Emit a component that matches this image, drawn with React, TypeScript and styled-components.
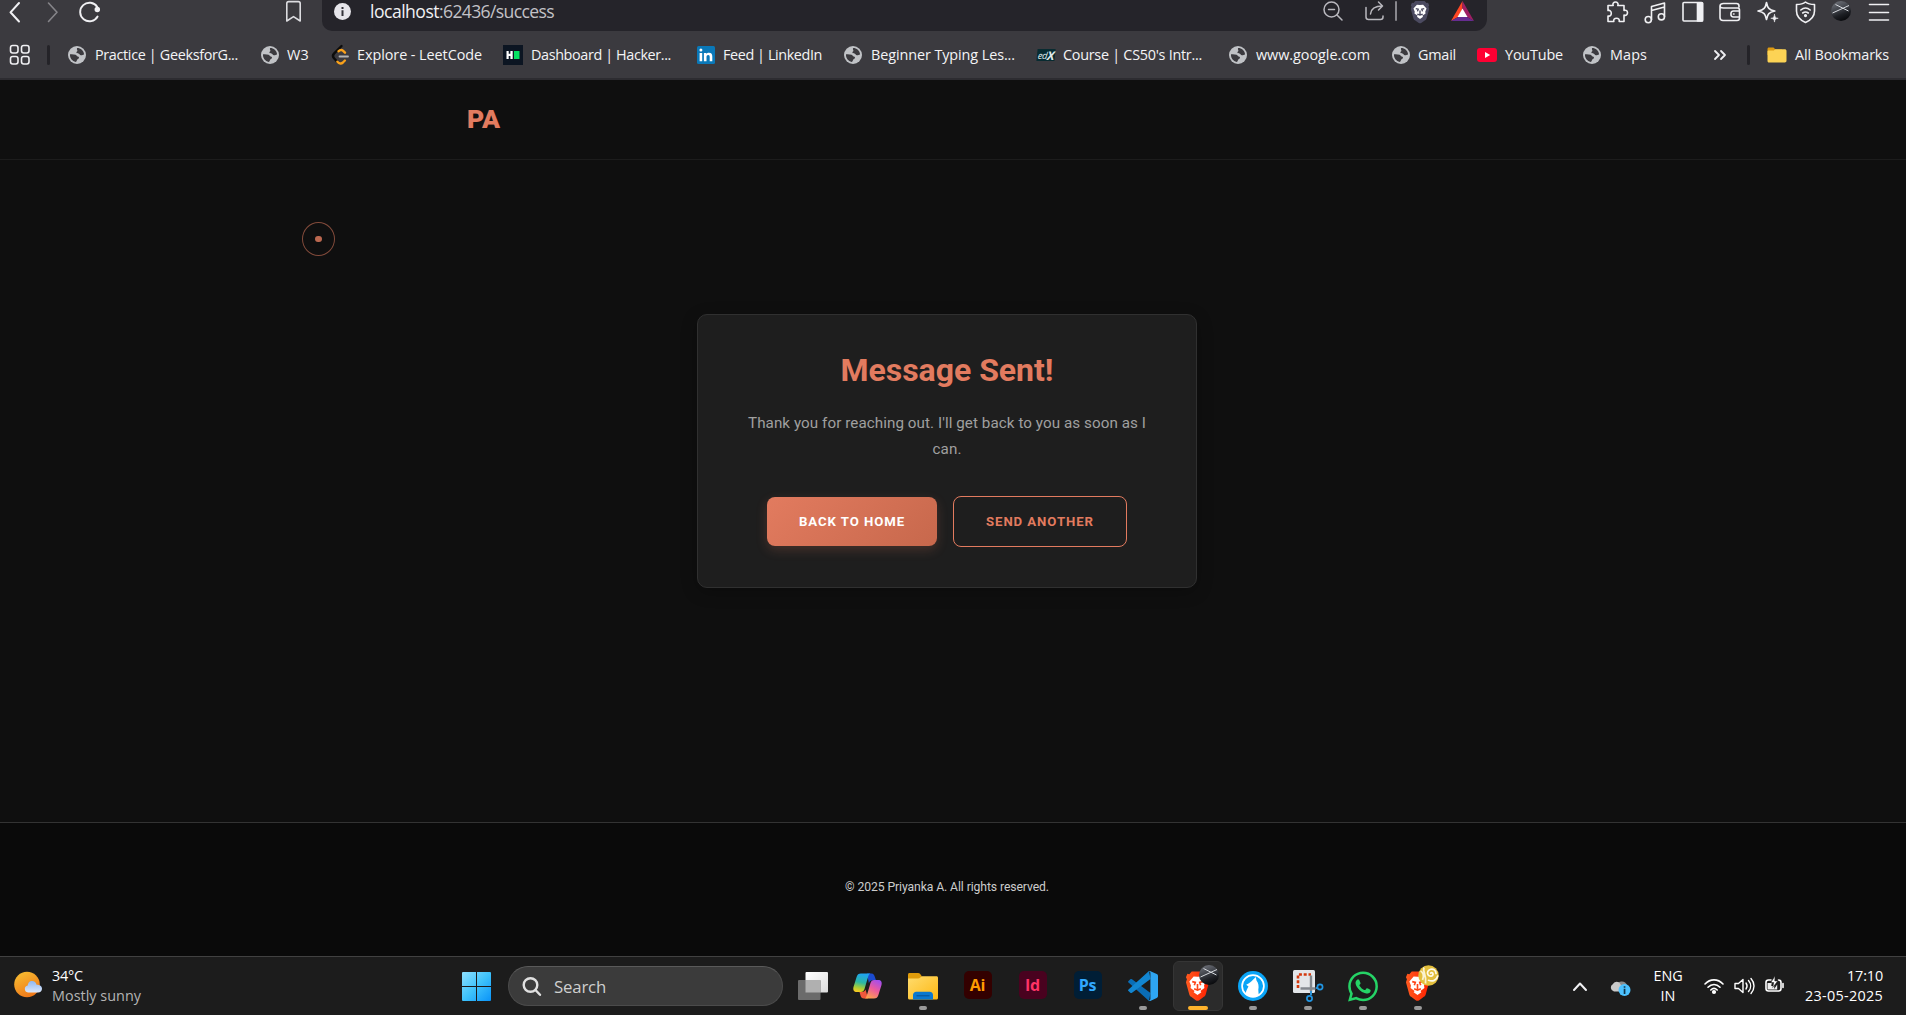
import React, { useLayoutEffect, useRef, useState } from "react";
import styled, { createGlobalStyle } from "styled-components";

const uiFont = `"Open Sans", "Noto Sans", sans-serif`;
const pageFont = `Roboto, "Liberation Sans", sans-serif`;

const GlobalStyle = createGlobalStyle`
  * { box-sizing: border-box; }
  html, body { margin: 0; padding: 0; background: #0f0f0f; overflow: hidden; }
  svg { display: block; flex: none; overflow: visible; }
`;

/* ---------- Fitted text ---------- */

const FitSpan = styled.span`
  display: inline-block;
  white-space: pre;
`;

/** Tracks a single-line label in or out so that it spans the given width. */
function Fit({ w, children }: { w: number; children: string }) {
  const ref = useRef<HTMLSpanElement>(null);
  const [tracking, setTracking] = useState(0);
  useLayoutEffect(() => {
    if (!ref.current) return;
    const natural = ref.current.getBoundingClientRect().width - tracking * children.length;
    setTracking((w - natural) / children.length);
  }, [w, children]);
  return (
    <FitSpan ref={ref} style={{ letterSpacing: `${tracking}px` }}>
      {children}
    </FitSpan>
  );
}

/* ---------- Layout ---------- */

const Screen = styled.div`
  position: relative;
  width: 1906px;
  height: 1015px;
  display: flex;
  flex-direction: column;
  overflow: hidden;
  background: #0f0f0f;
`;

const Chrome = styled.header`
  height: 80px;
  flex: none;
  background: #3b3a3f;
  border-bottom: 2px solid #2d2c31;
  font-family: ${uiFont};
  color: #f4f4f6;
`;

const NavRow = styled.div`
  height: 31px;
  display: flex;
  align-items: flex-start;
`;

const NavButtons = styled.div`
  width: 322px;
  flex: none;
  display: flex;
  padding: 0 20px 0 9px;
`;

const Slot = styled.div<{ $w: number; $h?: number }>`
  width: ${(p) => p.$w}px;
  height: ${(p) => p.$h ?? 23}px;
  flex: none;
  display: flex;
  align-items: center;
`;

const AddressBar = styled.div`
  width: 1165px;
  height: 31px;
  flex: none;
  display: flex;
  align-items: flex-start;
  padding-left: 12px;
  background: #25242a;
  border-radius: 0 0 12px 10px;
`;

const Url = styled.div`
  width: 972px;
  flex: none;
  padding-left: 19px;
  font-size: 17.6px;
  line-height: 22px;
  color: #c3c2c7;
  b { font-weight: 400; color: #f1f1f4; }
`;

const Divider = styled.i<{ $c: string; $w: number; $h: number }>`
  width: ${(p) => p.$w}px;
  height: ${(p) => p.$h}px;
  border-radius: 2px;
  background: ${(p) => p.$c};
`;

const Extensions = styled.div`
  display: flex;
  padding-left: 119px;
`;

const BookmarksRow = styled.nav`
  height: 47px;
  display: flex;
  align-items: center;
  padding-left: 9px;
  font-size: 14.4px;
  line-height: 20px;
`;

const Bookmark = styled.div<{ $w: number; $gap: number }>`
  width: ${(p) => p.$w}px;
  flex: none;
  display: flex;
  align-items: center;
  gap: ${(p) => p.$gap}px;
`;

const SiteHeader = styled.div`
  height: 80px;
  flex: none;
  border-bottom: 1px solid #1c1c1c;
  padding: 0 0 1px 467px;
  display: flex;
  align-items: center;
`;

const Logo = styled.div`
  font: 900 26.5px/32px ${pageFont};
  color: #e27b5f;
`;

const Main = styled.main`
  height: 662px;
  flex: none;
  display: flex;
  justify-content: center;
  align-items: flex-start;
  padding: 154px 12px 0 0;
`;

const Card = styled.section`
  width: 500px;
  height: 274px;
  background: #1e1e1e;
  border: 1px solid #303030;
  border-radius: 10px;
  box-shadow: 0 4px 16px rgba(0, 0, 0, 0.25);
  display: flex;
  flex-direction: column;
  align-items: center;
  font-family: ${pageFont};
`;

const Title = styled.h1`
  margin: 35px 0 0;
  font-size: 32px;
  line-height: 40px;
  font-weight: 700;
  color: #e27b5f;
`;

const Message = styled.p`
  margin: 20px 0 0;
  display: flex;
  flex-direction: column;
  align-items: center;
  font-size: 15.2px;
  line-height: 26px;
  color: #a0a0a0;
`;

const Actions = styled.div`
  display: flex;
  align-items: center;
  gap: 16px;
  margin-top: 34px;
`;

const Button = styled.a<{ $primary?: boolean }>`
  width: ${(p) => (p.$primary ? 170 : 174)}px;
  height: ${(p) => (p.$primary ? 49 : 51)}px;
  display: flex;
  align-items: center;
  justify-content: center;
  border-radius: 8px;
  border: ${(p) => (p.$primary ? "none" : "1px solid #e27b5f")};
  background: ${(p) => (p.$primary ? "linear-gradient(135deg, #e27b5f, #c7684c)" : "transparent")};
  box-shadow: ${(p) => (p.$primary ? "0 4px 12px rgba(226, 123, 95, 0.2)" : "none")};
  color: ${(p) => (p.$primary ? "#fff" : "#e27b5f")};
  font-size: 13.2px;
  font-weight: 700;
`;

const SiteFooter = styled.footer`
  height: 134px;
  flex: none;
  border-top: 1px solid #333;
  background: #0a0a0a;
  padding: 0 12px 5px 0;
  display: flex;
  align-items: center;
  justify-content: center;
  font: 400 12.2px/18px ${pageFont};
  color: #ccc;
`;

const CursorRing = styled.div`
  position: absolute;
  left: 302px;
  top: 222px;
  width: 33px;
  height: 34px;
  border: 1px solid rgba(226, 123, 95, 0.55);
  border-radius: 50%;
  display: flex;
  align-items: center;
  justify-content: center;
  &::after {
    content: "";
    width: 6.5px;
    height: 6.5px;
    border-radius: 50%;
    background: #bb6850;
  }
`;

/* ---------- Taskbar ---------- */

const Taskbar = styled.div`
  height: 59px;
  flex: none;
  display: flex;
  background: #1c1c1c;
  border-top: 1px solid #414141;
  font-family: ${uiFont};
  color: #fff;
  padding-left: 14px;
`;

const Weather = styled.div`
  width: 448px;
  flex: none;
  display: flex;
  gap: 9px;
  padding-top: 9px;
  font-size: 14.4px;
  line-height: 20px;
  small { display: block; font-size: inherit; color: #b4b4b4; }
  svg { margin-top: 6px; }
`;

const SearchBox = styled.div`
  width: 275px;
  height: 40px;
  flex: none;
  margin: 9px 2px 0 17px;
  padding: 0 0 0 14px;
  display: flex;
  align-items: center;
  gap: 13px;
  border-radius: 20px;
  background: #3b3b3b;
  border: 1px solid #4b4b4b;
  border-top-color: #5a5a5a;
  font-size: 16.8px;
  color: #cfcfcf;
`;

const StartButton = styled.div`
  margin-top: 15px;
`;

const AppButton = styled.div<{ $active?: boolean }>`
  position: relative;
  width: 50px;
  height: 50px;
  margin: 4px 2.5px 0;
  flex: none;
  display: flex;
  align-items: center;
  justify-content: center;
  border-radius: 6px;
  background: ${(p) => (p.$active ? "#2b2b2b" : "transparent")};
  border: 1px solid ${(p) => (p.$active ? "#353535" : "transparent")};
`;

const Indicator = styled.i<{ $active?: boolean }>`
  position: absolute;
  bottom: 0;
  width: ${(p) => (p.$active ? 20 : 8)}px;
  height: 4px;
  border-radius: 2px;
  background: ${(p) => (p.$active ? "#ffb32c" : "#999")};
`;

const Badge = styled.div`
  position: absolute;
  right: 3px;
  top: 3px;
`;

const AdobeTile = styled.div<{ $bg: string; $fg: string }>`
  width: 28px;
  height: 28px;
  border-radius: 5px;
  margin-bottom: 3px;
  display: flex;
  align-items: center;
  justify-content: center;
  background: ${(p) => p.$bg};
  color: ${(p) => p.$fg};
  font-size: 16px;
  font-weight: 700;
  letter-spacing: -0.3px;
  line-height: 28px;
`;

const Tray = styled.div`
  display: flex;
  flex: 1;
  padding-left: 128px;
`;

const TrayText = styled.div<{ $w: number; $align: string }>`
  width: ${(p) => p.$w}px;
  flex: none;
  padding-top: 9px;
  display: flex;
  flex-direction: column;
  align-items: ${(p) => p.$align};
  font-size: 14.4px;
  line-height: 20px;
`;

/* ---------- Icons ---------- */

type IconProps = { w?: number; h?: number; sw?: number; box?: string; c?: string; children: React.ReactNode };
const Line = ({ w = 22, h = 22, sw = 1.6, box, c = "#f0f0f3", children }: IconProps) => (
  <svg width={w} height={h} viewBox={box ?? `0 0 ${w} ${h}`} fill="none" stroke={c} strokeWidth={sw} strokeLinecap="round" strokeLinejoin="round">
    {children}
  </svg>
);

const Globe = () => (
  <svg width="18" height="18" viewBox="0 0 18 18">
    <circle cx="9" cy="9" r="9" fill="#c0c2c6" />
    <path d="M9.2 2.1c3.400 0 6.600 2.500 6.900 6.300-1.200-.1-1.900.9-3.200.8-1.300 0-1.100-1.500-2.400-1.800-1.200-.3-2.100.2-2.100-.9 0-1 1-.9 1-1.800 0-1-1-1.200-.2-2.600z" fill="#3b3a3f" />
    <path d="M2 8.300c1.700-.2 4.100-.1 5.600.5 1.300.5 1 1.700 2.200 1.800 1 .1 1.500.7 1 1.600-.4.8-1.500.8-1.800 1.700-.2.7-.3 1.400-1.200 2C4 15.200 1.700 12 2 8.300z" fill="#3b3a3f" />
  </svg>
);

const LeetCode = () => (
  <svg width="18" height="20" viewBox="0 0 18 20" fill="none" strokeWidth="2.400" strokeLinecap="round">
    <path d="M9.500 1 2 8.600c-1.300 1.400-1.300 3.200 0 4.600L5 16.500" stroke="#0c0c0c" />
    <path d="M6.500 6.200 8 5.300c1-.6 2-.5 2.900.3L13 7.700M5.400 16.700c2 2.200 4 2.200 5.500.8l2-2" stroke="#f9a11b" />
    <path d="M7.500 11.500H16" stroke="#b3b3b3" strokeWidth="1.800" />
  </svg>
);

const HackerRank = () => (
  <svg width="20" height="20" viewBox="0 0 20 20">
    <path fill="#0c1522" d="M0 0h20v20H0z" />
    <path fill="#fff" d="M3.500 6h2.200v2.800h1.700V6h2.300v8H7.400v-3H5.700v3H3.500z" />
    <path fill="#05e262" d="M11 6h5.500v8H11z" />
  </svg>
);

const LinkedIn = () => (
  <svg width="18" height="18" viewBox="0 0 18 18">
    <rect width="18" height="18" rx="1.500" fill="#0a78b8" />
    <path fill="#fff" d="M2.600 6.900h2.600v8.400H2.600zM2.400 4.100a1.500 1.500 0 1 1 3 0 1.500 1.500 0 0 1-3 0zM6.900 6.900h2.500V8c.5-.8 1.300-1.300 2.600-1.300 2.500 0 3.300 1.500 3.300 4v4.600h-2.600v-4.200c0-1.300-.3-2.200-1.500-2.200s-1.700.9-1.700 2.200v4.200H6.900z" />
  </svg>
);

const EdxMark = styled.span`
  width: 18px;
  height: 12px;
  flex: none;
  display: flex;
  align-items: center;
  justify-content: center;
  transform: skewX(-6deg);
  background: #082b31;
  font: italic 400 9.500px/11px ${uiFont};
  letter-spacing: -0.5px;
  color: #dfe9ea;
  b { font-size: 12px; }
`;

const YouTube = () => (
  <svg width="20" height="14" viewBox="0 0 20 14">
    <rect width="20" height="14" rx="3" fill="#ff0033" />
    <path d="M8 4v6l5.200-3z" fill="#fff" />
  </svg>
);

const BookmarkFolder = () => (
  <svg width="20" height="16" viewBox="0 0 20 16">
    <path d="M.5 2c0-1 .6-1.600 1.500-1.600h4.500l2 2H15V8H.5z" fill="#dd9a12" />
    <path d="M.5 4.200c0-.5.4-.8.900-.8h5.400l1.500-1.200h9.400c1 0 1.800.6 1.800 1.600v10c0 1-.7 1.700-1.700 1.700H2c-.9 0-1.500-.6-1.500-1.500z" fill="#fcd355" />
  </svg>
);

const BraveOutline = "M7 0h12l2.500 2.700 2-.4L25 6l-1 2 1 3-3.400 12.500c-.4 1.400-1 2-2 2.800L14.500 30c-1 .6-2 .6-3 0l-5.100-3.700c-1-.8-1.600-1.400-2-2.800L1 11l1-3-1-2 1.500-3.700 2 .4z";
const BraveFace = "M13 5.500 17 5l4.500 5.200-1.700 4.300.4 2.600-4.200 3.100 1 1.200-4 3-4-3 1-1.200-4.200-3.100.4-2.600-1.700-4.300L9 5z";
const BraveLines = "M7.500 10.500l3.200.7-1 3M18.500 10.500l-3.200.7 1 3M13 13v6M9.500 17.800l3.500 1.500 3.500-1.500";

const BraveShield = () => (
  <svg width="20" height="22" viewBox="0 0 26 30" preserveAspectRatio="none">
    <path d={BraveOutline} fill="#4b4a60" />
    <path d={BraveFace} fill="#fff" />
    <path d={BraveLines} fill="none" stroke="#4b4a60" strokeWidth="1.800" />
  </svg>
);

const BraveIcon = () => (
  <svg width="25" height="30" viewBox="0 0 26 30">
    <defs>
      <linearGradient id="brave" x1="0" x2="1">
        <stop offset="0" stopColor="#ff5a1f" />
        <stop offset="1" stopColor="#ff2000" />
      </linearGradient>
    </defs>
    <path d={BraveOutline} fill="url(#brave)" />
    <path d={BraveFace} fill="#fff" />
    <path d={BraveLines} fill="none" stroke="#ff4417" strokeWidth="1.700" />
  </svg>
);

const Bat = () => (
  <svg width="23" height="20" viewBox="0 0 23 20">
    <path d="M11.500 0 0 20l7-4 4.500-8z" fill="#ff4724" />
    <path d="M11.500 0 23 20l-7-4-4.500-8z" fill="#9e1f63" />
    <path d="M0 20h23l-7-4H7z" fill="#662d91" />
    <path d="M11.500 7.500 6.500 16h10z" fill="#fff" />
  </svg>
);

const Orb = ({ size = 20, id }: { size?: number; id: string }) => (
  <svg width={size} height={size} viewBox="0 0 20 20">
    <defs>
      <linearGradient id={id} x1="0.200" y1="0" x2="0.600" y2="1">
        <stop offset="0" stopColor="#70737b" />
        <stop offset=".4" stopColor="#43464d" />
        <stop offset=".7" stopColor="#1d1f24" />
        <stop offset="1" stopColor="#08090c" />
      </linearGradient>
    </defs>
    <circle cx="10" cy="10" r="10" fill={`url(#${id})`} />
    <path d="M1.500 12 18 4.500M4.500 3.500l13 6.500" stroke="#d5d8dd" strokeWidth="1" fill="none" />
  </svg>
);

const Lemon = () => (
  <svg width="21" height="21" viewBox="0 0 21 21">
    <circle cx="10.500" cy="10.500" r="10.200" fill="#e3bf3c" />
    <path d="M2.500 6c2.500 1 4 5 2 9M6 2.500c-2 4 3 7 1.500 16" stroke="#fbf3cf" strokeWidth="1.800" fill="none" />
    <path d="M18 8.500c0-3.200-2.700-5-5.300-4.300S8.600 7.700 10 9.800s5 1.700 5-.9c0-1.200-1.500-1.700-2.300-.8M19.700 11c-1 4.200-5 6-9.200 4.300" stroke="#fffbe8" strokeWidth="1.700" fill="none" strokeLinecap="round" />
  </svg>
);

const WindowsLogo = () => (
  <svg width="29" height="29" viewBox="0 0 29 29">
    <defs>
      <linearGradient id="win" gradientUnits="userSpaceOnUse" x1="0" y1="0" x2="29" y2="29">
        <stop offset="0" stopColor="#8ee0ff" />
        <stop offset=".5" stopColor="#3fc3fb" />
        <stop offset="1" stopColor="#0a93f8" />
      </linearGradient>
    </defs>
    <path fill="url(#win)" d="M1 0h13v14H0V1q0-1 1-1zM15 0h13q1 0 1 1v13H15zM0 15h14v14H1q-1 0-1-1zM15 15h14v13q0 1-1 1H15z" />
  </svg>
);

const WeatherIcon = () => (
  <svg width="29" height="27" viewBox="0 0 29 27">
    <defs>
      <linearGradient id="sun" x1=".2" y1="0" x2=".7" y2="1">
        <stop offset="0" stopColor="#f7bd31" />
        <stop offset="1" stopColor="#ee7418" />
      </linearGradient>
      <linearGradient id="cloud" x1="0" y1="0" x2="0" y2="1">
        <stop offset="0" stopColor="#8fb7f0" />
        <stop offset="1" stopColor="#dbe7fb" />
      </linearGradient>
    </defs>
    <circle cx="13" cy="12.500" r="12.800" fill="url(#sun)" />
    <path d="M14 20.500a3.600 3.600 0 0 1-.3-7.100c.9-3.400 1.800-4.500 4.300-4.500s4 1.500 4.600 3.800c3 .1 5.400 1.400 5.400 4 0 2.400-1.600 3.800-4 3.800z" fill="url(#cloud)" />
  </svg>
);

const TaskView = () => (
  <svg width="30" height="28" viewBox="0 0 30 28">
    <defs>
      <linearGradient id="tv" x1="0" y1="0" x2="1" y2="1">
        <stop offset="0" stopColor="#fff" />
        <stop offset="1" stopColor="#dcdcdc" />
      </linearGradient>
    </defs>
    <rect x="7.500" width="22.500" height="20.500" rx="1" fill="url(#tv)" />
    <rect y="8" width="22.500" height="20" rx="1" fill="#6b6b6b" />
    <path d="M7.500 8h15v12.500h-15z" fill="#b0b0b0" />
  </svg>
);

const Copilot = () => (
  <svg width="29" height="26" viewBox="0 0 29 26">
    <defs>
      <linearGradient id="cpA" x1=".4" y1="0" x2=".2" y2="1">
        <stop offset="0" stopColor="#1fa4ef" />
        <stop offset=".45" stopColor="#2bb6a4" />
        <stop offset=".75" stopColor="#a6cc39" />
        <stop offset="1" stopColor="#ffc91e" />
      </linearGradient>
      <linearGradient id="cpB" x1=".8" y1="0" x2=".3" y2="1">
        <stop offset="0" stopColor="#a04df0" />
        <stop offset=".5" stopColor="#ed5a9d" />
        <stop offset="1" stopColor="#ffa24d" />
      </linearGradient>
    </defs>
    <path d="M14 .5h4.500c2 0 2.700 1.300 3.300 3.300L23 7.300h-3.500c-2 0-3 1-3.600 3z" fill="#1b4bd0" />
    <path d="M15 25.500h-4c-2 0-3-1.300-3.500-3L6.500 19H9c2 0 3-1 3.600-2.500z" fill="#f0583c" />
    <path d="M8 .5h9.500c-1.200.4-1.800 1.500-2.300 3.100L11.500 16c-.6 2-1.700 3-3.700 3H3.500C.8 19-.2 16.700.5 14L3.600 4C4.300 1.600 5.600.5 8 .5z" fill="url(#cpA)" />
    <path d="M21 25.500h-9.500c1.200-.4 1.800-1.500 2.300-3.100L17.500 10c.6-2 1.700-3 3.700-3h4.300c2.700 0 3.700 2.300 3 5l-3.100 10c-.7 2.400-2 3.500-4.400 3.500z" fill="url(#cpB)" />
  </svg>
);

const Explorer = () => (
  <svg width="30" height="27" viewBox="0 0 30 27">
    <defs>
      <linearGradient id="fold" x1="0" y1="0" x2="1" y2="1">
        <stop offset="0" stopColor="#ffdc6e" />
        <stop offset="1" stopColor="#fdb813" />
      </linearGradient>
    </defs>
    <path d="M0 1.500C0 .6.600 0 1.500 0h8.700c.8 0 1.300.2 1.800.8L14 3.500V8H0z" fill="#e09c0b" />
    <path d="M0 5.500h10c1 0 1.700-.3 2.300-.9L14 3.200h14.500c.9 0 1.500.6 1.500 1.500V25c0 .9-.6 1.500-1.500 1.500h-27C.6 26.500 0 25.900 0 25z" fill="url(#fold)" />
    <path d="M5 26.500V22c0-2 1.400-3.300 3.300-3.300h13.400c2 0 3.300 1.300 3.300 3.300v4.500z" fill="#0a78cf" />
    <path d="M8.500 22.800h13" stroke="#084f91" strokeWidth="1" />
  </svg>
);

const VSCode = () => (
  <svg width="30" height="30" viewBox="0 0 30 30">
    <path d="M2.300 8.300.5 9.900c-.6.500-.6 1.200 0 1.700L21 30l1.500-8L4 8.200c-.6-.4-1.100-.4-1.700.1z" fill="#0a6db6" />
    <path d="M2.300 21.700.5 20.100c-.6-.5-.6-1.200 0-1.700L21 0l1.500 8L4 21.800c-.6.4-1.100.4-1.700-.1z" fill="#1286d1" />
    <path d="M22.300 30c-.9.100-1.500-.2-2.100-.8.900.6 2.200.1 2.200-1.200V2c0-1.300-1.300-1.800-2.200-1.200.6-.6 1.300-1 2.300-.6l6.200 2.900c.8.4 1.300 1 1.300 1.900v20c0 .9-.5 1.500-1.300 1.900z" fill="#2ea5f2" />
  </svg>
);

const LibreWolf = () => (
  <svg width="30" height="30" viewBox="0 0 30 30">
    <circle cx="15" cy="15" r="15" fill="#0aa5f7" />
    <circle cx="15" cy="15" r="10.900" fill="none" stroke="#fff" strokeWidth="1.700" />
    <path d="M7.500 23c.5-3.500 2-5.300 3-7.500L8.200 13.800c1.800-1 3.800-2 5.300-3.500L17.800 6l.7 3.600c2 2.400 2.500 6 1.800 9.200l.4 5.200c-4.400 2.800-9.800 2.300-13.200-1z" fill="#fff" />
  </svg>
);

const SnippingTool = () => (
  <svg width="30" height="32" viewBox="0 0 30 32">
    <rect width="22" height="23" rx="1.500" fill="#e3e6e9" />
    <path d="M5 18V4.500h13" fill="none" stroke="#d4380d" strokeWidth="2.600" strokeDasharray="3 1.800" />
    <path d="M18 5.500v16M7.500 18.500h15" stroke="#83888e" strokeWidth="2.400" fill="none" />
    <path d="M18 21v4M23 18h2" stroke="#2c93d6" strokeWidth="2" />
    <circle cx="16.500" cy="28.500" r="2.600" fill="none" stroke="#2196e3" strokeWidth="1.700" />
    <circle cx="27" cy="17" r="2.600" fill="none" stroke="#2196e3" strokeWidth="1.700" />
  </svg>
);

const WhatsApp = () => (
  <svg width="30" height="31" viewBox="0 0 24 24">
    <path fill="#25d366" d="M17.472 14.382c-.297-.149-1.758-.867-2.030-.967-.273-.099-.471-.148-.670.150-.197.297-.767.966-.940 1.164-.173.199-.347.223-.644.075-.297-.150-1.255-.463-2.390-1.475-.883-.788-1.480-1.761-1.653-2.059-.173-.297-.018-.458.130-.606.134-.133.298-.347.446-.520.149-.174.198-.298.298-.497.099-.198.050-.371-.025-.520-.075-.149-.669-1.612-.916-2.207-.242-.579-.487-.500-.669-.510-.173-.008-.371-.010-.570-.010-.198 0-.520.074-.792.372-.272.297-1.040 1.016-1.040 2.479 0 1.462 1.065 2.875 1.213 3.074.149.198 2.096 3.200 5.077 4.487.709.306 1.262.489 1.694.625.712.227 1.360.195 1.871.118.571-.085 1.758-.719 2.006-1.413.248-.694.248-1.289.173-1.413-.074-.124-.272-.198-.570-.347M12.050 21.785h-.004a9.870 9.870 0 0 1-5.031-1.378l-.361-.214-3.741.982.998-3.648-.235-.374a9.860 9.860 0 0 1-1.510-5.260c.001-5.450 4.436-9.884 9.888-9.884 2.640 0 5.122 1.030 6.988 2.898a9.825 9.825 0 0 1 2.893 6.994c-.003 5.450-4.437 9.884-9.885 9.884m8.413-18.297A11.815 11.815 0 0 0 12.050 0C5.495 0 .160 5.335.157 11.892c0 2.096.547 4.142 1.588 5.945L.057 24l6.305-1.654a11.882 11.882 0 0 0 5.683 1.448h.005c6.554 0 11.890-5.335 11.893-11.893a11.821 11.821 0 0 0-3.480-8.413z" />
  </svg>
);

/* ---------- Data ---------- */

const bookmarks = [
  { text: "Practice | GeeksforG...", textW: 143, w: 193, gap: 9, icon: <Globe /> },
  { text: "W3", textW: 22, w: 71, gap: 8, icon: <Globe /> },
  { text: "Explore - LeetCode", textW: 125, w: 171, gap: 7, icon: <LeetCode /> },
  { text: "Dashboard | Hacker...", textW: 140, w: 194, gap: 8, icon: <HackerRank /> },
  { text: "Feed | LinkedIn", textW: 99, w: 147, gap: 8, icon: <LinkedIn /> },
  { text: "Beginner Typing Les...", textW: 144, w: 193, gap: 9, icon: <Globe /> },
  { text: "Course | CS50's Intr...", textW: 139, w: 192, gap: 8, icon: <EdxMark>ed<b>X</b></EdxMark> },
  { text: "www.google.com", textW: 114, w: 163, gap: 9, icon: <Globe /> },
  { text: "Gmail", textW: 38, w: 85, gap: 8, icon: <Globe /> },
  { text: "YouTube", textW: 58, w: 106, gap: 8, icon: <YouTube /> },
  { text: "Maps", textW: 37, w: 131, gap: 9, icon: <Globe /> },
];

const apps = [
  { icon: <TaskView /> },
  { icon: <Copilot /> },
  { icon: <Explorer />, running: true },
  { icon: <AdobeTile $bg="#330000" $fg="#ff9a00">Ai</AdobeTile> },
  { icon: <AdobeTile $bg="#49021f" $fg="#ff3366">Id</AdobeTile> },
  { icon: <AdobeTile $bg="#001e36" $fg="#31a8ff">Ps</AdobeTile> },
  { icon: <VSCode />, running: true },
  { icon: <BraveIcon />, running: true, active: true, badge: <Orb id="orb-task" /> },
  { icon: <LibreWolf />, running: true },
  { icon: <SnippingTool />, running: true },
  { icon: <WhatsApp />, running: true },
  { icon: <BraveIcon />, running: true, badge: <Lemon /> },
];

/* ---------- App ---------- */

function BrowserChrome() {
  return (
    <Chrome>
      <NavRow>
        <NavButtons>
          <Slot $w={38}><Line w={11} sw={2}><path d="M10 2 1.500 11.300 10 20.500" /></Line></Slot>
          <Slot $w={32}><Line w={11} c="#858489"><path d="M1.500 2 10 11.300 1.500 20.500" /></Line></Slot>
          <Slot $w={206}>
            <Line sw={1.900}><path d="M18.600 15.500A9.300 9.300 0 1 1 18.300 6" /><circle cx="18.300" cy="8.500" r="1.800" fill="#f0f0f3" /></Line>
          </Slot>
          <Slot $w={20} $h={22}><Line w={17} c="#dcdce0"><path d="M1.800 3.500c0-1.200.7-1.900 1.900-1.900h9.600c1.200 0 1.900.7 1.900 1.900V21l-6.700-4.400L1.800 21z" /></Line></Slot>
        </NavButtons>
        <AddressBar>
          <Slot $w={17} $h={22}>
            <svg width="17" height="17" viewBox="0 0 17 17"><circle cx="8.500" cy="8.500" r="8.500" fill="#e6e5ea" /><path d="M7.500 4h2v2h-2zM7.500 7.300h2V13h-2z" fill="#333238" /></svg>
          </Slot>
          <Url><b><Fit w={69}>localhost</Fit></b><Fit w={115}>:62436/success</Fit></Url>
          <Slot $w={42} $h={21}><Line w={20} c="#b9b8be" sw={1.500} h={20}><circle cx="8.500" cy="8.500" r="7.500" /><path d="M5.500 8.500h6M14 14l5 5" /></Line></Slot>
          <Slot $w={30} $h={22}><Line w={20} h={20} c="#b9b8be" sw={1.500}><path d="M1 6.500V16c0 1.700.8 2.500 2.500 2.500h12c1.700 0 2.500-.8 2.500-2.500v-1M5.500 13c.5-5 4-8 12-8M13.500 1l4 4-4 4" /></Line></Slot>
          <Slot $w={15} $h={22}><Divider $w={1.5} $h={20} $c="#88878d" /></Slot>
          <Slot $w={41}><BraveShield /></Slot>
          <Slot $w={23} $h={22}><Bat /></Slot>
        </AddressBar>
        <Extensions>
          <Slot $w={38}><Line><path d="M2 4.500h5.200c-1-2.200.7-3.500 2.300-3.500s3.300 1.300 2.300 3.500H18v5c2.200-.9 3.500.7 3.500 2.300S20.200 15 18 14v6.500h-4.800c.5-2-.8-3.300-2.700-3.300S7.300 18.500 7.800 20.500H2V15c2 .5 3.300-.8 3.300-2.700S4 9 2 9.500z" /></Line></Slot>
          <Slot $w={38}><Line><path d="M7.500 18.500V5.500L20.500 2v13.500M7.500 9.500l13-3.500" /><circle cx="4.300" cy="18.600" r="3.100" /><circle cx="17.400" cy="15.800" r="3.100" /></Line></Slot>
          <Slot $w={37}><Line><rect x="1" y="1.500" width="19.500" height="18.500" rx="1" /><path d="M15.500 2h5v18h-5z" fill="#f0f0f3" /></Line></Slot>
          <Slot $w={38}><Line><path d="M20 6V5c0-1.500-1-2.500-2.500-2.500h-13C2.500 2.500 1 3.500 1 5s1.500 2 3.500 2h14c1.200 0 2 .8 2 2v8c0 1.500-1 2.500-2.500 2.500H4c-2 0-3-1-3-3V5M20 10h-5.500c-3.500 0-3.500 6 0 6H20M14.500 13h.5" /></Line></Slot>
          <Slot $w={38}><Line><path d="M9.500 1.500c1 5.500 2.500 7.200 8.300 8.500-5.800 1.300-7.300 3-8.300 8.500C8.500 13 7 11.300 1 10c6-1.300 7.500-3 8.500-8.500z" /><path d="M17.500 13.500c.4 2.800 1 3.400 3.700 3.800-2.700.4-3.300 1-3.700 3.800-.4-2.800-1-3.400-3.700-3.800 2.700-.4 3.300-1 3.700-3.800z" fill="#f0f0f3" strokeWidth=".6" /></Line></Slot>
          <Slot $w={36}><Line><path d="M10.500 1c2.500 2 5.500 2.500 9 2.500V10c0 5-3 8.800-9 11.500C4.500 18.800 1.500 15 1.500 10V3.500c3.500 0 6.500-.5 9-2.500z" /><path d="M5.800 9c3-2.600 6.400-2.600 9.400 0M7.700 12c2-1.500 3.600-1.500 5.600 0" /><circle cx="10.500" cy="14.600" r=".8" fill="#f0f0f3" /></Line></Slot>
          <Slot $w={37} $h={22}><Orb id="orb-profile" /></Slot>
          <Slot $w={22}><Line><path d="M1.500 3.500h19M1.500 11.500h19M1.500 19h19" /></Line></Slot>
        </Extensions>
      </NavRow>
      <BookmarksRow>
        <Slot $w={38}>
          <Line><rect x="1.500" y="1.500" width="7.500" height="7.500" rx="2.200" /><rect x="12.500" y="1.500" width="7.500" height="7.500" rx="2.200" /><rect x="1.500" y="12.500" width="7.500" height="7.500" rx="2.200" /><rect x="12.500" y="12.500" width="7.500" height="7.500" rx="2.200" /></Line>
        </Slot>
        <Slot $w={21}><Divider $w={3} $h={20} $c="#242328" /></Slot>
        {bookmarks.map((b) => (
          <Bookmark key={b.text} $w={b.w} $gap={b.gap}>
            {b.icon}
            <Fit w={b.textW}>{b.text}</Fit>
          </Bookmark>
        ))}
        <Slot $w={33}><Line w={12} h={10} sw={1.8}><path d="M1 1l4 4-4 4M7 1l4 4-4 4" /></Line></Slot>
        <Slot $w={20}><Divider $w={3} $h={20} $c="#242328" /></Slot>
        <Bookmark $w={130} $gap={8}><BookmarkFolder /><Fit w={94}>All Bookmarks</Fit></Bookmark>
      </BookmarksRow>
    </Chrome>
  );
}

function WindowsTaskbar() {
  return (
    <Taskbar>
      <Weather>
        <WeatherIcon />
        <div><Fit w={31}>34°C</Fit><small><Fit w={89}>Mostly sunny</Fit></small></div>
      </Weather>
      <StartButton><WindowsLogo /></StartButton>
      <SearchBox>
        <Line w={18} h={19} sw={2.4} c="#e0e0e0"><circle cx="7.500" cy="8" r="6.800" /><path d="M12.700 13.200l4.300 4.600" /></Line>
        <Fit w={52}>Search</Fit>
      </SearchBox>
      {apps.map((a, i) => (
        <AppButton key={i} $active={a.active}>
          {a.icon}
          {a.badge && <Badge>{a.badge}</Badge>}
          {a.running && <Indicator $active={a.active} />}
        </AppButton>
      ))}
      <Tray>
        <Slot $w={37} $h={58}><Line w={14} h={9} sw={2}><path d="M1 8l6-6.500L13 8" /></Line></Slot>
        <Slot $w={35} $h={60}>
          <svg width="21" height="18" viewBox="0 0 21 18">
            <path d="M6 6a6 5 0 0 1 11 1v5H6z" fill="#8c8c8c" />
            <path d="M4 13.500A4 4 0 0 1 3 6c2-3 6-3 7.500.5l4 3v4z" fill="#c9c9c9" />
            <circle cx="14.500" cy="12" r="6" fill="#4cc2ff" />
            <path d="M13.700 8.200h1.700v1.600h-1.700zM13.700 10.800h1.700V16h-1.700z" fill="#10354a" />
          </svg>
        </Slot>
        <TrayText $w={46} $align="center"><Fit w={29}>ENG</Fit><Fit w={15}>IN</Fit></TrayText>
        <Slot $w={13} />
        <Slot $w={30} $h={57}>
          <Line w={20} h={16} c="#fff" sw={1.600}><path d="M1 6c5.200-5.500 12.800-5.500 18 0M4 9.200c3.500-3.700 8.500-3.700 12 0M6.800 12c2-2 4.400-2 6.400 0" /><circle cx="10" cy="14" r="1.300" fill="#fff" /></Line>
        </Slot>
        <Slot $w={31} $h={58}>
          <Line w={20} h={18} c="#fff" sw={1.4}><path d="M1 6.500h3.500L9 2.500v13l-4.500-4H1zM12 6c1.300 1.800 1.300 4.200 0 6M14.500 3.500c2.800 3.300 2.800 7.700 0 11M17 1.500c4 4.500 4 10.500 0 15" /></Line>
        </Slot>
        <Slot $w={27} $h={55}>
          <svg width="19" height="17" viewBox="0 0 19 17">
            <path d="M6 4H3.500Q1 4 1 6.500v6Q1 15 3.500 15h10q2.500 0 2.500-2.500v-6Q16 4 13.500 4M18 7.500v4" fill="none" stroke="#fff" strokeWidth="1.600" strokeLinecap="round" />
            <path d="M2.500 7h4.200l-.5 3h3v3l3-4.500V13.500h-9.700z" fill="#eee" />
            <path d="M10 0 5.800 6.500h3L7.700 11.500l5-6.500H9.800z" fill="#fff" stroke="#1c1c1c" strokeWidth=".5" />
          </svg>
        </Slot>
        <TrayText $w={91} $align="flex-end"><Fit w={36}>17:10</Fit><Fit w={78}>23-05-2025</Fit></TrayText>
      </Tray>
    </Taskbar>
  );
}

export default function App() {
  return (
    <Screen>
      <GlobalStyle />
      <BrowserChrome />
      <SiteHeader><Logo><Fit w={33}>PA</Fit></Logo></SiteHeader>
      <Main>
        <Card>
          <Title><Fit w={213}>Message Sent!</Fit></Title>
          <Message>
            <Fit w={398}>Thank you for reaching out. I'll get back to you as soon as I</Fit>
            <Fit w={29}>can.</Fit>
          </Message>
          <Actions>
            <Button $primary><Fit w={106}>BACK TO HOME</Fit></Button>
            <Button><Fit w={108}>SEND ANOTHER</Fit></Button>
          </Actions>
        </Card>
      </Main>
      <SiteFooter><Fit w={204}>© 2025 Priyanka A. All rights reserved.</Fit></SiteFooter>
      <WindowsTaskbar />
      <CursorRing />
    </Screen>
  );
}
